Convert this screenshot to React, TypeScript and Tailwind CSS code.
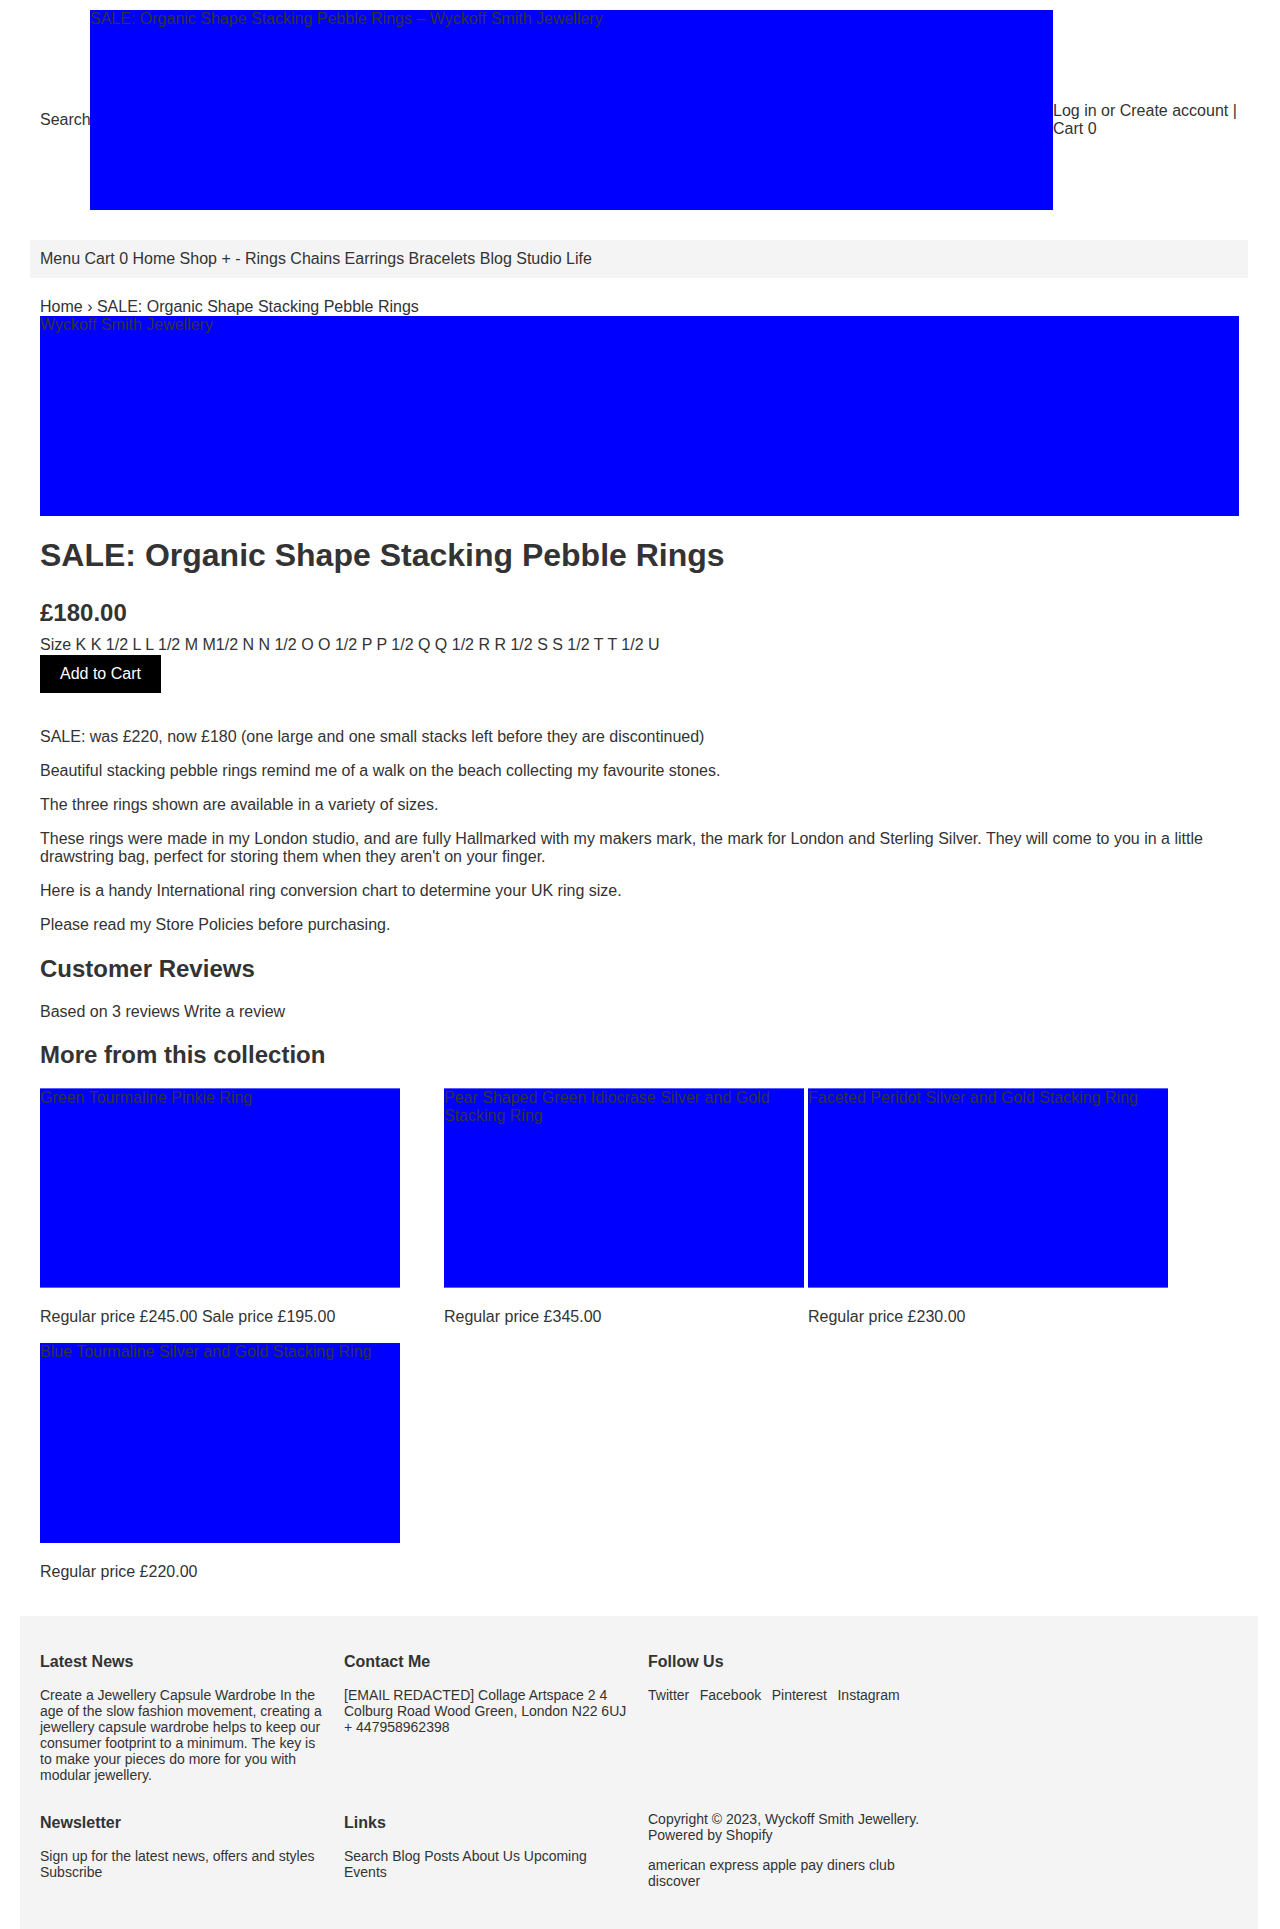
import React from "react";

const products = [
  { name: "Green Tourmaline Pinkie Ring", price: "Regular price £245.00 Sale price £195.00" },
  { name: "Pear Shaped Green Idiocrase Silver and Gold Stacking Ring", price: "Regular price £345.00" },
  { name: "Faceted Peridot Silver and Gold Stacking Ring", price: "Regular price £230.00" },
  { name: "Blue Tourmaline Silver and Gold Stacking Ring", price: "Regular price £220.00" },
];

export default function App() {
  return (
    <div className="font-['Liberation_Sans',Arial,sans-serif] text-[16px] leading-[normal] text-[#333333] bg-white min-h-[1929px]">
      {/* Header */}
      <div className="flex items-center pl-[40px] pt-[10px]">
        <span className="w-[50px] whitespace-nowrap">Search</span>
        <div className="w-[963px] h-[200px] mb-[20px] bg-[#0000ff] text-[#333333]">
          SALE: Organic Shape Stacking Pebble Rings – Wyckoff Smith Jewellery
        </div>
        <div className="w-[190px]">Log in or Create account | Cart 0</div>
      </div>

      {/* Nav */}
      <div className="mt-[10px] ml-[30px] w-[1218px] bg-[#f4f4f4] py-[10px] pl-[10px]">
        Menu Cart 0 Home Shop + - Rings Chains Earrings Bracelets Blog Studio Life
      </div>

      {/* Main */}
      <div className="pl-[40px] w-[1239px]">
        <div className="mt-[20px]">Home › SALE: Organic Shape Stacking Pebble Rings</div>
        <div className="w-[1199px] h-[200px] bg-[#0000ff]">Wyckoff Smith Jewellery</div>

        <h1 className="mt-[21px] text-[32px] font-bold">SALE: Organic Shape Stacking Pebble Rings</h1>
        <div className="mt-[25px] text-[24px] font-bold">£180.00</div>
        <div className="mt-[9px]">
          Size K K 1/2 L L 1/2 M M1/2 N N 1/2 O O 1/2 P P 1/2 Q Q 1/2 R R 1/2 S S 1/2 T T 1/2 U
        </div>
        <div className="mt-[1px] flex">
          <button className="bg-black text-white px-[20px] py-[10px] leading-[normal]">Add to Cart</button>
        </div>

        <div className="mt-[35px] flex flex-col gap-[16px]">
          <p>SALE: was £220, now £180 (one large and one small stacks left before they are discontinued)</p>
          <p>Beautiful stacking pebble rings remind me of a walk on the beach collecting my favourite stones.</p>
          <p>The three rings shown are available in a variety of sizes.</p>
          <p>
            These rings were made in my London studio, and are fully Hallmarked with my makers mark, the mark for London and
            Sterling Silver. They will come to you in a little drawstring bag, perfect for storing them when they aren't on your
            finger.
          </p>
          <p>Here is a handy International ring conversion chart to determine your UK ring size.</p>
          <p>Please read my Store Policies before purchasing.</p>
        </div>

        <h2 className="mt-[21px] text-[24px] font-bold">Customer Reviews</h2>
        <div className="mt-[20px]">Based on 3 reviews Write a review</div>
        <h2 className="mt-[20px] text-[24px] font-bold">More from this collection</h2>

        <div className="mt-[19px] flex flex-wrap gap-x-[4px] gap-y-[17px]">
          {products.map((p, i) => (
            <div key={p.name} className={i === 0 ? "w-[360px] mr-[40px]" : "w-[360px]"}>
              <div
                className={
                  i < 3
                    ? "h-[200px] bg-[#0000ff] border-y border-[#5c5cff]"
                    : "h-[200px] bg-[#0000ff]"
                }
              >
                {p.name}
              </div>
              <div className="mt-[20px]">{p.price}</div>
            </div>
          ))}
        </div>
      </div>

      {/* Footer */}
      <div className="mt-[35px] ml-[20px] w-[1238px] bg-[#f4f4f4] pl-[20px] pt-[37px] pb-[60px]">
        <div className="grid grid-cols-[304px_304px_304px] gap-y-[28px] text-[14px]">
          <div className="pr-[19px]">
            <h3 className="text-[16px] font-bold">Latest News</h3>
            <p className="mt-[16px]">
              Create a Jewellery Capsule Wardrobe In the age of the slow fashion movement, creating a jewellery capsule wardrobe
              helps to keep our consumer footprint to a minimum. The key is to make your pieces do more for you with modular
              jewellery.
            </p>
          </div>
          <div className="pr-[19px]">
            <h3 className="text-[16px] font-bold">Contact Me</h3>
            <p className="mt-[16px]">
              [EMAIL REDACTED] Collage Artspace 2 4 Colburg Road Wood Green, London N22 6UJ + 447958962398
            </p>
          </div>
          <div className="pr-[19px]">
            <h3 className="text-[16px] font-bold">Follow Us</h3>
            <div className="mt-[16px] flex gap-x-[10.5px]">
              <span>Twitter</span>
              <span>Facebook</span>
              <span>Pinterest</span>
              <span>Instagram</span>
            </div>
          </div>

          <div className="pr-[19px]">
            <h3 className="mt-[3px] text-[16px] font-bold">Newsletter</h3>
            <p className="mt-[16px]">Sign up for the latest news, offers and styles Subscribe</p>
          </div>
          <div className="pr-[19px]">
            <h3 className="mt-[3px] text-[16px] font-bold">Links</h3>
            <p className="mt-[16px]">Search Blog Posts About Us Upcoming Events</p>
          </div>
          <div className="pr-[19px]">
            <p>Copyright © 2023, Wyckoff Smith Jewellery. Powered by Shopify</p>
            <p className="mt-[14px]">american express apple pay diners club discover</p>
          </div>
        </div>
      </div>
    </div>
  );
}
